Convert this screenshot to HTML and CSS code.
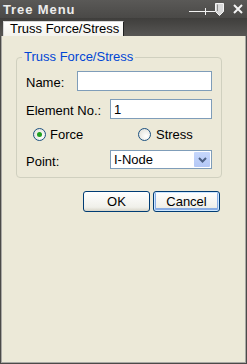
FILE: index.html
```html
<!DOCTYPE html>
<html lang="en">
<head>
    <meta charset="UTF-8">
    <meta name="viewport" content="width=device-width, initial-scale=1.0">
    <title>Tree Menu</title>
    <link rel="stylesheet" href="styles.css">
</head>
<body>
    <div class="window">
        <div class="titlebar">
            <span class="title">Tree Menu</span>
            <svg class="pin" width="38" height="16" viewBox="0 0 38 16">
                <path d="M0 10.5H26M16.5 7V14" stroke="#f2f2f2" stroke-width="1" fill="none"/>
                <path d="M26.5 2.5H34.5V10.5L30.5 14.5L26.5 10.5Z" fill="#d8d8d8" stroke="#f4f4f4" stroke-width="1"/>
                <path d="M28.5 3.5V10" stroke="#8a8a8a" stroke-width="1"/>
            </svg>
            <svg class="close" width="10" height="10" viewBox="0 0 10 10">
                <path d="M1 1L9 9M9 1L1 9" stroke="#f4f4f4" stroke-width="2" fill="none"/>
            </svg>
        </div>
        <div class="tabs">
            <div class="tab">Truss Force/Stress</div>
        </div>
        <div class="panel">
            <fieldset class="group">
                <legend>Truss Force/Stress</legend>
                <div class="row">
                    <label>Name:</label>
                    <input type="text" class="field wide">
                </div>
                <div class="row">
                    <label>Element No.:</label>
                    <input type="text" class="field" value="1">
                </div>
                <div class="row radios">
                    <span class="radio-item"><span class="radio checked"></span>Force</span>
                    <span class="radio-item"><span class="radio"></span>Stress</span>
                </div>
                <div class="row point">
                    <label>Point:</label>
                    <div class="select">
                        <span class="select-text">I-Node</span>
                        <span class="select-btn">
                            <svg width="9" height="6" viewBox="0 0 9 6">
                                <path d="M1 1L4.5 4.5L8 1" stroke="#4d6185" stroke-width="2" fill="none"/>
                            </svg>
                        </span>
                    </div>
                </div>
            </fieldset>
            <div class="actions">
                <button class="btn">OK</button>
                <button class="btn focus">Cancel</button>
            </div>
        </div>
    </div>
</body>
</html>
```

FILE: styles.css
```css
body {
    margin: 0;
    font-family: "Liberation Sans", Arial, sans-serif;
    font-size: 13px;
    background: #4b4a48;
}
.window {
    width: 247px;
    height: 364px;
    display: flex;
    flex-direction: column;
}
.titlebar {
    height: 18px;
    display: flex;
    align-items: center;
    padding: 0 4px 0 3px;
    background: linear-gradient(#5a5957, #4a4947);
}
.title {
    flex: 1;
    color: #ececec;
    font-weight: bold;
    font-size: 13px;
    letter-spacing: 0.9px;
}
.pin {
    margin-right: 6px;
    margin-top: -1px;
}
.tabs {
    height: 18px;
    padding: 4px 0 0 3px;
    box-sizing: border-box;
    background: linear-gradient(#3f3e3c, #575654);
    display: flex;
    align-items: flex-end;
}
.tab {
    width: 121px;
    height: 15px;
    box-sizing: border-box;
    padding-left: 6px;
    line-height: 14px;
    background: linear-gradient(#ffffff, #f3f2ec);
    border-left: 1px solid #d8d8d8;
    border-top: 1px solid #d8d8d8;
    border-right: 1px solid #202020;
    color: #000;
}
.panel {
    flex: 1;
    margin: 0 1px 1px 1px;
    background: #ece9d8;
    border: 1px solid #a9a8a4;
    border-top: none;
}
.group {
    margin: 14px 0 0 14px;
    width: 206px;
    min-width: 0;
    box-sizing: border-box;
    padding: 7px 9px 8px 9px;
    border: 1px solid #d0d0bf;
    border-radius: 4px;
    display: flex;
    flex-direction: column;
    gap: 8px;
}
.group legend {
    color: #0046d5;
    padding: 0 2px;
    margin-left: -4px;
    line-height: 14px;
}
.row {
    height: 20px;
    display: flex;
    align-items: center;
    justify-content: space-between;
}
.row label {
    color: #000;
    margin-top: 3px;
}
.field {
    width: 102px;
    height: 20px;
    box-sizing: border-box;
    border: 1px solid #7f9db9;
    background: #fff;
    padding: 0 3px;
    font-family: inherit;
    font-size: 13px;
    margin: 0;
}
.field.wide {
    width: 135px;
}
.radios {
    height: 15px;
    justify-content: flex-start;
    padding-left: 7px;
}
.radio-item {
    width: 105px;
    flex: none;
    display: flex;
    align-items: center;
    gap: 4px;
}
.radio-item + .radio-item {
    width: auto;
    gap: 5px;
}
.radio {
    width: 13px;
    height: 13px;
    box-sizing: border-box;
    border-radius: 50%;
    border: 1px solid #1c5180;
    background: radial-gradient(circle at 65% 65%, #ffffff, #dcdcd4);
    display: flex;
    align-items: center;
    justify-content: center;
}
.radio.checked::after {
    content: "";
    width: 5px;
    height: 5px;
    border-radius: 50%;
    background: #21a121;
}
.point {
    height: 19px;
}
.select {
    width: 102px;
    height: 19px;
    box-sizing: border-box;
    border: 1px solid #7f9db9;
    background: #fff;
    display: flex;
    align-items: center;
}
.select-text {
    flex: 1;
    padding-left: 3px;
}
.select-btn {
    width: 16px;
    height: 15px;
    margin-right: 1px;
    background: linear-gradient(#c6d7fc, #b4c8f6);
    border-radius: 1px;
    display: flex;
    align-items: center;
    justify-content: center;
}
.actions {
    width: 206px;
    margin: 13px 0 0 14px;
    padding-right: 2px;
    box-sizing: border-box;
    display: flex;
    justify-content: flex-end;
    gap: 3px;
}
.btn {
    width: 67px;
    height: 21px;
    box-sizing: border-box;
    border: 1px solid #003c74;
    border-radius: 3px;
    background: linear-gradient(#ffffff, #f0f0ea 80%, #d8d5c8);
    font-family: inherit;
    font-size: 13px;
    color: #000;
    padding: 0;
}
.btn.focus {
    box-shadow: inset 0 0 0 1px #cee7ff, inset 0 -1px 0 2px #89ade4;
}
```
